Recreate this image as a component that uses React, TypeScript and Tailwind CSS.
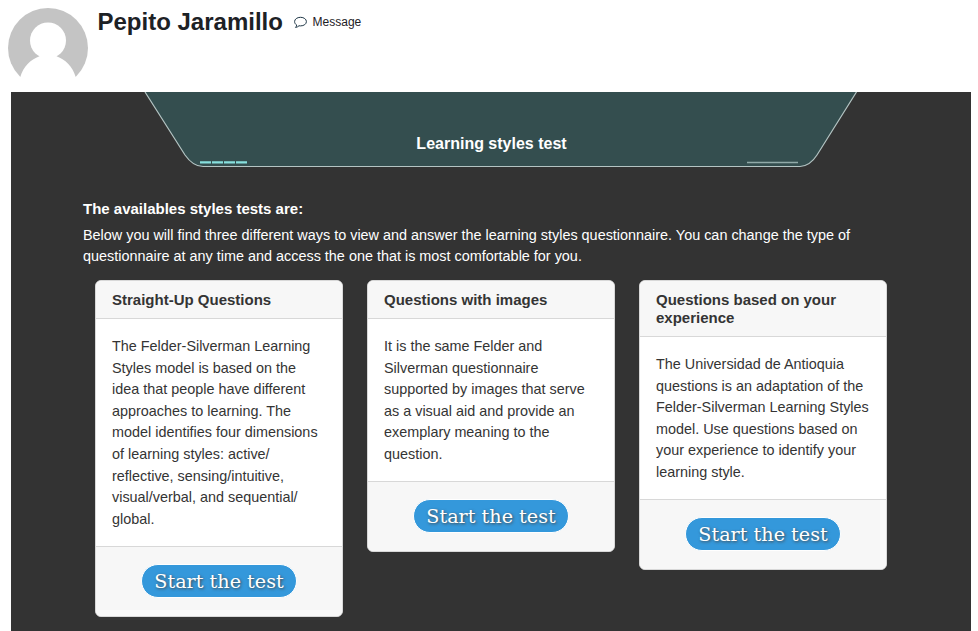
import React from "react";

type Test = { title: string[]; lines: string[] };

const tests: Test[] = [
  {
    title: ["Straight-Up Questions"],
    lines: [
      "The Felder-Silverman Learning",
      "Styles model is based on the",
      "idea that people have different",
      "approaches to learning. The",
      "model identifies four dimensions",
      "of learning styles: active/",
      "reflective, sensing/intuitive,",
      "visual/verbal, and sequential/",
      "global.",
    ],
  },
  {
    title: ["Questions with images"],
    lines: [
      "It is the same Felder and",
      "Silverman questionnaire",
      "supported by images that serve",
      "as a visual aid and provide an",
      "exemplary meaning to the",
      "question.",
    ],
  },
  {
    title: ["Questions based on your", "experience"],
    lines: [
      "The Universidad de Antioquia",
      "questions is an adaptation of the",
      "Felder-Silverman Learning Styles",
      "model. Use questions based on",
      "your experience to identify your",
      "learning style.",
    ],
  },
];

function Lines({ items }: { items: string[] }) {
  return (
    <>
      {items.map((line) => (
        <span key={line} className="block whitespace-nowrap">
          {line}
        </span>
      ))}
    </>
  );
}

function Avatar() {
  return (
    <svg className="size-20 shrink-0" viewBox="0 0 80 80">
      <defs>
        <clipPath id="upper">
          <rect width="80" height="69" />
        </clipPath>
      </defs>
      <g clipPath="url(#upper)">
        <circle cx="40" cy="40" r="40" fill="#c4c4c4" />
        <circle cx="40" cy="32.5" r="18" fill="#fff" />
        <path d="M12 70 C15 59 22 51.500 31.500 48.200 L31 45 H49 L48.500 48.200 C58 51.500 65 59 68 70 V80 H12 Z" fill="#fff" />
      </g>
    </svg>
  );
}

function SpeechBubble() {
  return (
    <svg className="h-[13px] w-[13px]" viewBox="0 0 13 13" fill="none" stroke="#1d3545" strokeWidth="1">
      <path d="M6.500 1.300 C9.900 1.300 12.400 3.200 12.400 5.600 S9.900 9.900 6.500 9.900 C6 9.900 5.500 9.850 5 9.750 C4 10.800 2.800 11.300 1.500 11.400 C2.200 10.800 2.600 10 2.700 9 C1.300 8.200 .6 7 .6 5.600 C.6 3.200 3.100 1.300 6.500 1.300 Z" />
    </svg>
  );
}

function TestCard({ title, lines }: Test) {
  return (
    <article className="w-[248px] overflow-hidden rounded-[6px] border border-[#d8d8d8] bg-white">
      <h3 className="border-b border-[#d8d8d8] bg-[#f7f7f7] px-4 pt-[10px] pb-[9px] text-[15px] leading-[18px] font-bold">
        <Lines items={title} />
      </h3>
      <p className="px-4 pt-[16.8px] pb-[15.2px] text-[14.4px] leading-[21.6px]">
        <Lines items={lines} />
      </p>
      <div className="flex h-[70px] justify-center border-t border-[#d8d8d8] bg-[#f7f7f7] pt-[17px]">
        <button className="h-[34px] w-[156px] rounded-[17px] border border-white bg-[#3498db] pt-px font-['DejaVu_Serif',serif] text-[19.2px] leading-[31px] whitespace-nowrap text-white [text-shadow:1px_1px_3px_#444]">
          Start the test
        </button>
      </div>
    </article>
  );
}

export default function App() {
  return (
    <div className="h-[631px] w-[978px] overflow-hidden bg-white font-['Liberation_Sans',Arial,sans-serif] text-[#343434]">
      <header className="flex h-[92px] items-start pt-2 pl-2">
        <Avatar />
        <h2 className="ml-[9.5px] text-[24px] leading-[28px] font-bold text-[#1d2125]">Pepito Jaramillo</h2>
        <a className="mt-[5px] ml-[10.7px] flex items-center gap-[6px] text-[12px] leading-[18px] text-[#1d2125]">
          <SpeechBubble />
          Message
        </a>
      </header>
      <main className="ml-[11px] h-[539px] w-[960px] bg-[#333]">
        <div className="relative h-[76px]">
          <svg className="absolute inset-0" width="960" height="76" viewBox="0 0 960 76">
            <path
              d="M134 0 L174 63 Q182 74.500 192 74.500 H789 Q799 74 806 63 L845.500 0"
              fill="#344e4f"
              stroke="#b4c4c3"
              strokeWidth="1.2"
            />
            <path d="M189 70.300 H236" stroke="#86e0de" strokeWidth="2.200" strokeDasharray="11 1" />
            <path d="M736 70.500 H787" stroke="#91aaa9" strokeWidth="1.500" />
          </svg>
          <h1 className="relative pt-[42px] pl-px text-center text-[16px] leading-[19px] font-bold text-white">
            Learning styles test
          </h1>
        </div>
        <section className="h-[112.2px] pt-[32px] pl-[72px] text-white">
          <h2 className="text-[15px] leading-[18px] font-bold">The availables styles tests are:</h2>
          <p className="mt-[6.5px] text-[14.41px] leading-[21.6px]">
            <Lines
              items={[
                "Below you will find three different ways to view and answer the learning styles questionnaire. You can change the type of",
                "questionnaire at any time and access the one that is most comfortable for you.",
              ]}
            />
          </p>
        </section>
        <section className="ml-[84px] flex items-start gap-6">
          {tests.map((test) => (
            <TestCard key={test.title[0]} {...test} />
          ))}
        </section>
      </main>
    </div>
  );
}
